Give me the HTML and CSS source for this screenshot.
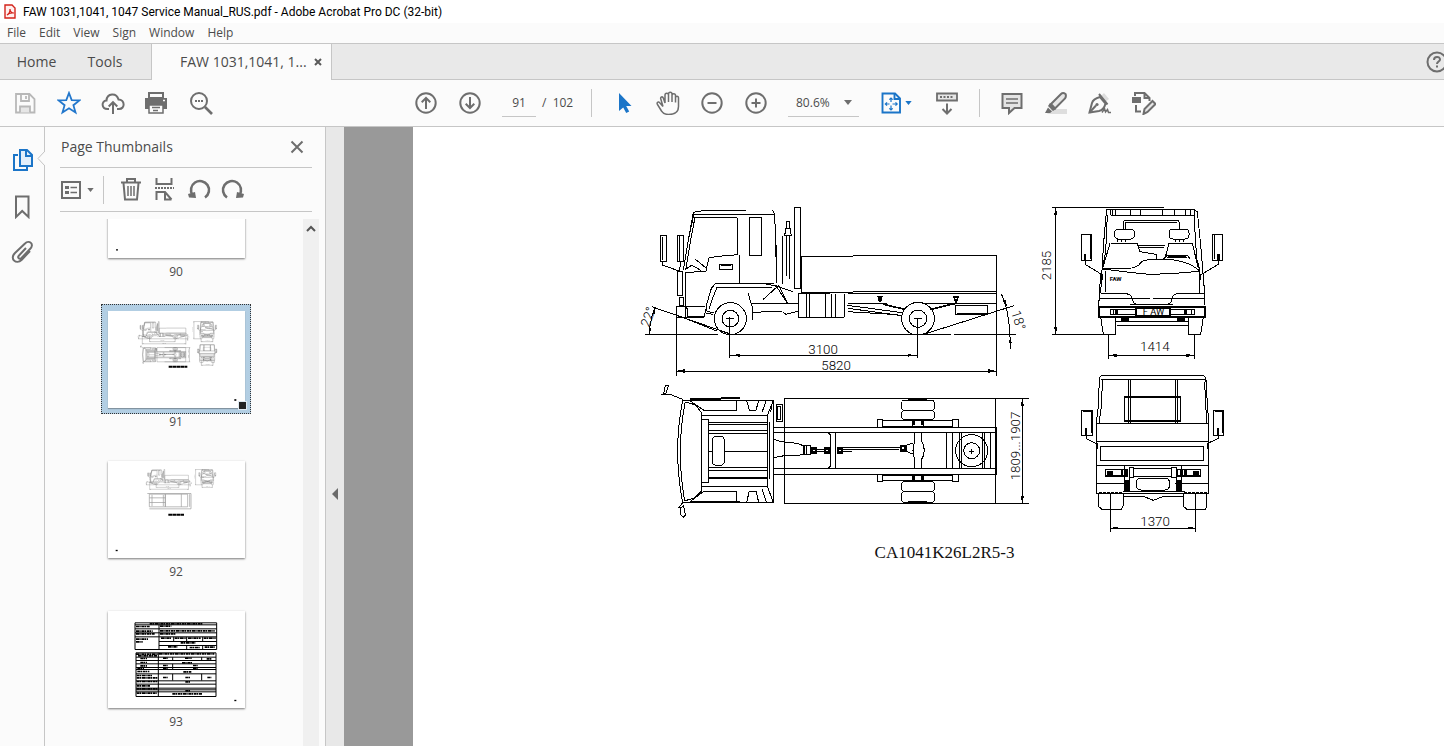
FILE: index.html
```html
<!DOCTYPE html>
<html lang="en">
<head>
<meta charset="utf-8">
<title>FAW 1031,1041, 1047 Service Manual_RUS.pdf - Adobe Acrobat Pro DC (32-bit)</title>
<link rel="stylesheet" href="styles.css">
</head>
<body>
<header class="titlebar">
  <svg class="app-icon" viewBox="0 0 12 15"><path d="M1 1h7l3 3v10H1z" fill="#fff0ef" stroke="#d3231b" stroke-width="1.4"/><path d="M3 11c2-1 3-4 3-6 0 3 1 4 4 4-3-.5-5 0-7 2z" fill="none" stroke="#d3231b" stroke-width="1.2"/></svg>
  <span>FAW 1031,1041, 1047 Service Manual_RUS.pdf - Adobe Acrobat Pro DC (32-bit)</span>
</header>
<nav class="menubar">
  <button>File</button><button>Edit</button><button>View</button><button>Sign</button><button>Window</button><button>Help</button>
</nav>
<div class="tabs">
  <button class="tab-home">Home</button><button class="tab-tools">Tools</button>
  <div class="tab-doc"><button class="doc-name">FAW 1031,1041, 1...</button><button class="doc-close" aria-label="Close tab"><svg viewBox="0 0 8 8"><path d="M1 1l6 6M7 1L1 7" stroke="#5a5a5a" stroke-width="2"/></svg></button></div>
  <button class="help" aria-label="Help"><svg viewBox="0 0 22 22"><g class="ln"><circle cx="11" cy="11" r="9.5"/><path d="M8 9c0-4 6-4 6-.5 0 2-3 2.200-3 4.500M11 14.500v2"/></g></svg></button>
</div>
<div class="toolbar">
  <button class="tool" aria-label="Save"><svg viewBox="0 0 24 24"><g fill="none" stroke="#b8b8b8" stroke-width="1.800"><path d="M3 3h13.500L21.500 8v13.500H3z"/><path d="M8 3v7h8V3"/><path d="M7 21.500V15.500h10v6" fill="#e6e6e6"/><path d="M13 5v3"/></g></svg></button>
  <button class="tool" aria-label="Star"><svg viewBox="0 0 24 24"><path d="M12 2l2.700 7.100 7.800.3-6.100 4.800 2.100 7.300L12 17.300l-6.500 4.200 2.100-7.300-6.100-4.800 7.800-.3z" fill="none" stroke="#2277cc" stroke-width="1.800"/></svg></button>
  <button class="tool" aria-label="Upload"><svg viewBox="0 0 24 24"><g class="ln"><path d="M8 18H6.500C.5 18-.200 10 5.500 9.500 6 2 15.500 1.500 17.500 8.500 24 8.500 24.500 18 18 18h-2"/><path d="M12 23V11.500M7.700 15.500l4.300-4.300 4.300 4.300"/></g></svg></button>
  <button class="tool" aria-label="Print"><svg viewBox="0 0 24 24"><path d="M4 2h14v5H4z" class="ln"/><path d="M0 7h22v11h-4v-4H4v4H0z" fill="#6e6e6e"/><path d="M4 14h14v8H4zM7 16.500h8M8 19.500h5" class="ln th"/><path d="M18 9.500h2" stroke="#fbfbfb" stroke-width="1.500"/></svg></button>
  <button class="tool" aria-label="Find"><svg viewBox="0 0 24 24"><circle cx="10" cy="10" r="8" class="ln"/><path d="M16 16l7 7" class="ln fat"/><path d="M6 9h2v2H6zm3 0h2v2H9zm3 0h2v2h-2z" fill="#6e6e6e"/></svg></button>
  <button class="tool page-tools" aria-label="Previous page"><svg viewBox="0 0 24 24"><g class="ln"><circle cx="12" cy="12" r="9.700"/><path d="M12 18V7M7.700 11.200L12 7l4.300 4.200"/></g></svg></button>
  <button class="tool" aria-label="Next page"><svg viewBox="0 0 24 24"><g class="ln"><circle cx="12" cy="12" r="9.700"/><path d="M12 6v11M7.700 12.800L12 17l4.300-4.200"/></g></svg></button>
  <input class="page-no" aria-label="Page number" value="91"><span class="page-total">/&nbsp; 102</span>
  <span class="sep"></span>
  <button class="tool" aria-label="Select"><svg viewBox="0 0 24 24"><path d="M7 2v18l4.200-3.500 3 5.500 3-1.500-3-5.500H19.500z" fill="#1b75c8"/></svg></button>
  <button class="tool" aria-label="Hand"><svg viewBox="0 0 24 24"><path class="ln th" d="M7 15.500L4 12C2 9.500.5 12 1.500 13.500l4 6.500c2 3 4 3.500 7 3.500 6 0 10-2.500 10-8V7c0-2.500-3-2.500-3 0v4.500M19.500 11V4.500c0-2.500-3.500-2.500-3.500 0V11M16 10V3c0-2.500-3.500-2.500-3.500 0v8M12.500 10V4C12.500 1.500 9 1.500 9 4v8L7.300 7C6.500 5 4 6 4.800 8L7 15.500"/></svg></button>
  <button class="tool" aria-label="Zoom out"><svg viewBox="0 0 24 24"><g class="ln"><circle cx="12" cy="12" r="9.700"/><path d="M7.500 12h9"/></g></svg></button>
  <button class="tool" aria-label="Zoom in"><svg viewBox="0 0 24 24"><g class="ln"><circle cx="12" cy="12" r="9.700"/><path d="M7.500 12h9M12 7.500v9"/></g></svg></button>
  <div class="zoom-box"><select aria-label="Zoom"><option>80.6%</option></select><svg class="caret" viewBox="0 0 8 5"><path d="M0 0h8L4 5z" fill="#6e6e6e"/></svg></div>
  <button class="fit" aria-label="Fit page"><svg class="fit-icon" viewBox="0 0 20 22"><g fill="none" stroke="#1b75c8" stroke-width="1.900"><path d="M1.500 1.500H14L19 6.500V20.500H1.500z"/><path d="M13.500 1.500V7H19"/><path stroke-width="1.200" d="M10 6v4M10 13.500V18M4.500 12h4M11.500 12h4.500M8.300 7.700L10 6l1.700 1.700M8.300 16.300L10 18l1.700-1.700M6 10.300L4.300 12 6 13.700M14.500 10.300l1.700 1.700-1.700 1.700"/></g></svg><svg class="caret small" viewBox="0 0 8 5"><path d="M0 0h8L4 5z" fill="#1b75c8"/></svg></button>
  <button class="tool" aria-label="Scrolling"><svg viewBox="0 0 24 24"><path d="M2 2.500h20v7H2z" fill="#e6e6e6" stroke="#6e6e6e" stroke-width="1.800"/><path d="M5 6h14" stroke="#6e6e6e" stroke-width="2" stroke-dasharray="2 1.500"/><path d="M12 12.500v10M7.500 18l4.500 4.500 4.500-4.500" class="ln"/></svg></button>
  <span class="sep"></span>
  <button class="tool" aria-label="Comment"><svg viewBox="0 0 24 24"><path d="M2.500 3h19v14h-7L9 22v-5H2.500z" fill="#e4e4e4" stroke="#6e6e6e" stroke-width="2"/><path d="M6 8h12M6 12h12" class="ln th"/></svg></button>
  <button class="tool" aria-label="Highlight"><svg viewBox="0 0 24 24"><path d="M7 18h16v5H3z" fill="#dedede"/><path d="M7 13L17 3q2-2 4.500 0 1 2-.5 4.500L11 17.500z" fill="#e6e6e6" stroke="#6e6e6e" stroke-width="2"/><path d="M6 12l6 6-3 2-5-5zM4 16.500l4 4L6 22H1z" fill="#6e6e6e"/></svg></button>
  <button class="tool" aria-label="Sign"><svg viewBox="0 0 24 24"><path d="M13 5l3-3 5 6-4 3z" fill="#dedede"/><g class="ln"><path d="M1.500 21.500L4 12q1-4 8-6l5.500 6.500Q16 19 11 20z"/><path d="M1.500 21.500l6.500-7M11 3l8.500 10.500"/></g><circle cx="9" cy="13.500" r="1.600" fill="#6e6e6e"/><path d="M14 21.500l2.500-4 1 3.500 2-2.500 1 3H23" class="ln th"/></svg></button>
  <button class="tool" aria-label="Edit"><svg viewBox="0 0 24 24"><path d="M0 6h9v6H0z" fill="#6e6e6e"/><g class="ln"><path d="M3 5V2h9.500l5 5v3M12.500 2v5h5M4 14v6.500h5"/><path d="M11.500 23l1-5 8-8 3 3-8 8z" fill="#e6e6e6"/></g></svg></button>
</div>
<main class="workspace">
  <nav class="rail">
    <button class="active" aria-label="Page Thumbnails"><svg viewBox="0 0 24 26"><g fill="none" stroke="#1b75c8" stroke-width="2"><path d="M9 3h7l5 5v11H9z" fill="#e2effb"/><path d="M15 3v6h6"/><path d="M7 8H3v15h13v-4"/></g></svg></button>
    <button aria-label="Bookmarks"><svg viewBox="0 0 24 26"><path d="M5 3.500h12.500V24l-6.300-6L5 24z" class="ln"/></svg></button>
    <button aria-label="Attachments"><svg viewBox="0 0 24 26"><path d="M15 9l-7 7.500c-2 2 .5 4.500 2.500 2.500l8.500-9c5-5-1-9.500-5-5.500L4 14c-6 6 1.500 12 6.500 7l8.500-9" class="ln"/></svg></button>
    <svg class="notch" viewBox="0 0 8 15"><path d="M8 0L1 7.500 8 15" fill="#fbfbfb" stroke="#c4c4c4"/></svg>
  </nav>
  <aside class="panel">
    <div class="panel-head"><h2>Page Thumbnails</h2><button aria-label="Close panel"><svg viewBox="0 0 14 14"><path d="M1.500 1.500l11 11M12.500 1.500l-11 11" class="ln"/></svg></button></div>
    <div class="panel-tools">
      <button class="options" aria-label="Options"><svg class="opt-icon" viewBox="0 0 20 18"><path d="M1 1h18v16H1z" class="ln"/><path d="M4 5h4v3H4zM4 10h4v3H4z" fill="#6e6e6e"/><path d="M9.500 6.500H16M9.500 11.500H16" class="ln th"/></svg><svg class="caret small" viewBox="0 0 8 5"><path d="M0 0h8L4 5z" fill="#6e6e6e"/></svg></button>
      <span class="sep"></span>
      <button class="ptool" aria-label="Delete"><svg viewBox="0 0 24 24"><g class="ln"><path d="M2 4.500h20M8 4V1h8v3M4.500 5l1.500 16.500h12L19.500 5"/><path class="th" d="M9 8v10M12 8v10M15 8v10"/></g></svg></button>
      <button class="ptool" aria-label="Split"><svg viewBox="0 0 24 24"><g class="ln"><path d="M3.500 0v6h15V0M3.500 22V14H12l6.500 7.500M12 14v7.500h6.500"/><path d="M2 10h19" stroke-dasharray="2 1"/></g></svg></button>
      <button class="ptool" aria-label="Rotate left"><svg viewBox="0 0 24 24"><path d="M5.500 17A9 9 0 1 1 18 19.500" class="ln fat"/><path d="M1 16l7-2 1 6-7-.5z" fill="#6e6e6e"/></svg></button>
      <button class="ptool" aria-label="Rotate right"><svg viewBox="0 0 24 24"><path d="M18.500 17A9 9 0 1 0 6 19.500" class="ln fat"/><path d="M23 16l-7-2-1 6 7-.5z" fill="#6e6e6e"/></svg></button>
    </div>
    <div class="list">
      <div class="thumbs">
        <figure><div class="frame"><svg class="thumb" viewBox="0 0 411 290"><path d="M24 264h6v4h-6z"/></svg></div><figcaption>90</figcaption></figure>
        <figure class="selected"><div class="frame"><svg class="thumb" viewBox="0 0 411 290"><svg class="mini" x="86" y="26" width="245" height="141" viewBox="0 0 1800 1035"><use href="#truck"/></svg><path d="M182 167h56" stroke="#000" stroke-width="6" stroke-dasharray="11 1"/><path d="M379 264h6v5h-6z"/></svg><span class="handle"></span></div><figcaption>91</figcaption></figure>
        <figure><div class="frame"><svg class="thumb" viewBox="0 0 411 290"><svg class="mini" x="110" y="20" width="218" height="126" viewBox="0 0 1800 1035"><use href="#side"/><use href="#front"/></svg><g fill="none" stroke="#999" stroke-width="2"><path d="M124 99h48v38h-48zM172 99h67v38h-67zM124 110h48M124 124h48M220 99v38M118 97h131v46H124M245 99v38M132 101v34M166 101v34"/></g><path d="M181 161h47" stroke="#000" stroke-width="6" stroke-dasharray="11 1"/><path d="M23 266h6v4h-6z"/></svg></div><figcaption>92</figcaption></figure>
        <figure><div class="frame"><svg class="thumb" viewBox="0 0 411 290"><g fill="none" stroke="#000" stroke-width="3"><path d="M81 35h245v80H81zM81 41h245M81 53h245M81 65h245M81 77h245M153 41v74M153 91h173M153 103h173M197 77v14M236 77v14M284 77v14M236 103v12M284 103v12M84 125h240v131H84zM84 138h240M84 148h240M84 158h240M84 169h240M84 175h240M84 188h240M84 209h240M84 219h240M84 231h240M84 236h240M84 242h240M151 125v131M194 138v10M194 158v17M194 188v20M281 138v10M281 188v20"/></g><g fill="none" stroke="#000" stroke-width="5" stroke-dasharray="9 1 4 2"><path d="M125 38h158M84 46h42M84 60h50M84 68h56M84 84h36M84 92h20M156 45h34M156 59h164M156 68h48M159 81h30M200 81h35M240 81h38M287 81h36M218 95h44M180 107h28M245 109h30M290 108h30M84 129h66M153 128h166M90 134h58M97 142h20M165 141h16M231 141h20M296 143h14M97 154h20M222 155h30M97 164h20M165 163h14M255 163h16M88 172h20M165 172h14M255 172h16M88 181h36M226 182h24M86 193h46M86 200h64M165 199h14M232 199h14M298 199h12M86 211h62M232 212h14M86 224h40M86 233h62M232 239h14M86 246h60M193 248h90"/></g><path d="M379 266h6v4h-6z"/></svg></div><figcaption>93</figcaption></figure>
      </div>
      <div class="scroll"><svg viewBox="0 0 10 7"><path d="M1 6l4-4 4 4" fill="none" stroke="#555" stroke-width="2"/></svg></div>
    </div>
  </aside>
  <button class="grip" aria-label="Collapse panel"><svg viewBox="0 0 6 12"><path d="M6 0v12L0 6z" fill="#6a6a6a"/></svg></button>
  <section class="document">
    <article class="page">
      <svg class="drawing" viewBox="0 0 1800 1035">
        <g id="truck">
          <!-- Side elevation -->
          <g id="side">
            <path d="M145 225l15-90 15-83 30-5 130-2 78 0 6 13 3 82 2 90M152 225l14-84 14-74h126l2 112-46 4-40 5-5 22-4 18-61 5M160 135l16-76h240M343 66h36v114h-36zM253 208h40v14h-40zM257 211h32M312 180v84M152 223l18-12 28 15M180 192l32 26M77 121h18v78H77zM83 126v70M127 121h17v78h-17zM134 124v75M82 199v11l50 18M136 199l-2 33M128 230h13v70h-13zM133 307h12v25h-12zM124 333h26v33h-26zM150 230v103h60M155 332l4 33h48l8-30M124 366h82M242 265h176M242 277h170M242 265l-13 15-16 55 2 14M246 277l-16 40-8 24"/>
            <path d="M478 38h18v242h-18zM455 80h8v20h-8zM453 100h12l4 21h-20zM455 122v120M462 122v130M443 124v143M424 150v114M380 264l45 10 50 16M385 313l46-42 27 54M422 270l35 55M339 294l13 43v38M350 325h140M350 354l45-5 46 1M443 350l10 8 37-10M215 349l22 5M214 354l20 4M498 184h156M498 184v109M498 293h156M490 296v71h34v-71M514 296v71M570 296v71M588 296v71M490 296h95M490 367h138"/>
            <path d="M654 181h430v142M654 290h430M640 296h444M640 325h115M865 325h220M628 296v71M601 296v71M635 331l33 4 133 18M640 340l160 22M638 350l150 9M965 323l-75 20M960 325l-4 5M961 331v27h97v-28h-94zM970 354h86"/>
            <path stroke-width="5" d="M730 306h10l-3 11h-4zM957 306h12l-4 12h-4zM745 328l65 15M885 344l68-17M965 357h88"/>
            <circle cx="286" cy="371" r="48"/><circle cx="286" cy="371" r="25"/><circle cx="849" cy="371" r="49"/><circle cx="849" cy="371" r="26"/><path d="M274 371h24M284 365v123M836 371h24M848 368v120"/>
            <path d="M30 418h219M275 418h673M956 418h187M50 335l236 82M150 370l95 38M869 417l268-85M60 336q-14 35-18 83M1099 297q27 55 27 166M124 366v177M1084 323v220M284 481h564M124 528h960"/>
            <path class="fill" d="M284 481l30-4v8zM848 481l-30-4v8zM124 528l26-6v12zM1084 528l-26-6v12zM60 336l-8 22 9-1zM42 419l0-20 8 2zM1116 335l-12-17 9-2zM1126 424l-4 20h8z"/>
            <g class="dim"><text x="520" y="477">3100</text><text x="559" y="525">5820</text><text transform="translate(42 398) rotate(-70)">22°</text><text transform="translate(1128 352) rotate(72)">18°</text></g>
          </g>
          <!-- Plan view -->
          <g transform="translate(45 540)">
            <path d="M98 76q-30 150 0 307M106 80q-29 145-2 298M98 75h272v308H98M105 81l30 8 20 24v235l-20 20-32 10M155 121h197v213H155M120 77l43 30h97V75M120 380l40-30h100v33M155 133h21v188h-21M176 142h176M176 148h176M176 165h176M176 175h176M176 230h11M223 230h129M176 278h176M176 285h176M176 307h176M176 311h176M358 140v172M352 121l18-45M352 334l18 48M336 112l13-36M361 112l5-20M336 343l13 39M290 76l8 30h20l8-30M290 382l8-34h20l8 34M98 73l-40-16M41 57l5-27h10l-8 25zM33 57h25M98 383l-12 16M92 399v20l8 8 6-7-5-27z"/>
            <rect x="187" y="184" width="36" height="87" rx="12"/><path d="M378 88h18v51h-18zM382 93h10v40h-10zM403 71h633M403 385h633M403 71v315M370 157h666M370 172h666M370 280h666M370 297h666M370 192l22 8 50 5 20 8v26l-25 2-34 1-33 6M460 212h20v26h-20zM470 212v26M480 223h55M480 230h55M535 173l5 5v96l-5 6M556 173v107M560 223h45M560 230h45"/>
            <path stroke-width="6" d="M120 73l150-4M120 382h150M485 218h12v15h-12zM525 218h12v15h-12zM565 218h12v15h-12z"/>
          </g>
          <g transform="translate(615 570)">
            <path d="M0 41h566M0 355h566M466 41v314M0 188h180M0 194h90l90-2M180 182h20v18h-20zM200 180l18-5M200 200l22 8M223 142v32q-8 24 0 44v33M244 142v25q18 30 0 58v26M320 142v108M337 142v108M359 142v108M363 142v108M428 142v108M432 142v108M451 142v108M112 103h14v23h-14zM338 103h17v23h-17zM126 107h212M126 124h212M112 269h14v21h-14zM338 269h17v21h-17zM126 271h212M126 287h212M218 107h32v16h-32zM218 271h32v16h-32zM547 41v314"/>
            <path stroke-width="5" d="M468 126v143"/><rect x="184" y="45" width="100" height="31" rx="11"/><rect x="184" y="76" width="100" height="28" rx="11"/><rect x="184" y="289" width="100" height="30" rx="11"/><rect x="184" y="319" width="100" height="34" rx="11"/><path stroke-width="6" d="M205 43h55M205 351h55M184 184h10v12h-10zM222 108v12M246 108v12M222 273v12M246 273v12"/>
            <circle cx="395" cy="197" r="48"/><circle cx="395" cy="197" r="24"/><path d="M388 199h14M395 192v14"/><path class="fill" d="M547 41l-5 22h10zM547 355l-5-22h10z"/>
            <g class="dim"><text transform="translate(539 286) rotate(-90)">1809...1907</text></g>
          </g>
          <!-- Front elevation -->
          <g id="front" transform="translate(1185 0)">
            <path d="M65 38h338M77 38v380M65 418h165M230 42h260l12 8 10 100 12 145M230 42l-9 100-9 152M242 60h250l8 130 10 36M232 60l-5 110-10 52M240 42v18M246 42v18M257 42v18M300 42v18M332 42v18M398 42v18M434 42v18M467 42v18M480 42v18M492 42v18M281 102V80q0-5 8-5h150q8 0 8 5v22M287 102V81h155M263 132v10M275 132v10M287 132v10M435 132v10M447 132v10M459 132v10M242 145h80l8 25 48 8v17M405 190l12-45h70l18 75M240 145l-22 75h75q30 0 40-18 10-9 45-9 90-4 132 36M325 152h80M325 158h76M400 193l12-12h60l8 10M220 222q90 12 140 16 90-2 148-10M227 228v64M508 228v66M212 294h65q25 2 29 14 2 20 18 20h85q16 0 18-20 2-14 29-14h66M212 234l-6 100M522 294v36M206 310h155M370 310h154M300 329h130"/>
            <rect x="253" y="102" width="61" height="30" rx="12"/><rect x="417" y="102" width="60" height="30" rx="12"/>
            <path stroke-width="5" d="M206 336h319v29H206zM318 338h101v25H318z"/><path d="M240 344h77v14h-77zM420 344h74v14h-74zM250 344v14M484 344v14M155 118h29v77h-29zM180 121v70M165 178v30l53 32M548 118h29v77h-29zM552 121v70M565 178v30l-53 32M216 236v18M512 236v18M212 366l8 52h35v-52M476 366v52h36l8-52M255 378h220M262 392h215M255 378v12"/><path class="fill" d="M272 365h24v13h-24zM440 365h24v13h-24zM255 344h8v14h-8zM463 344h8v14h-8zM162 178h7v20h-7zM562 178h7v20h-7zM412 185q30-6 60 0v5q-30-5-60 0z"/>
            <path d="M236 418v73M493 418v73M236 481h257"/><path class="fill" d="M77 38l-5 22h10zM77 418l-5-22h10zM236 481l24-5v10zM493 481l-24-5v10z"/>
            <g class="dim"><text transform="translate(62 256) rotate(-90)">2185</text><text x="330" y="469">1414</text><text class="badge" x="338" y="359">F AW</text><text class="logo" x="239" y="257">FAW</text></g>
          </g>
          <!-- Rear elevation -->
          <g transform="translate(1275 510)">
            <path d="M118 44q0-13 13-13h293q13 0 14 13l3 55 5 76M123 44h312M118 44l-3 80-6 50M128 44l-5 90-6 40M438 44l-4 10 6 120M110 175h335v209H110zM110 230h335M121 245h310v41H121zM110 300h335M110 355h85M345 355h100M205 43v132M211 43v132M346 43v132M352 43v132M65 136h33v75H65zM70 140h23v65M460 136h30v75h-30zM464 140h22v65M78 190v30l33 17M475 190v30l-32 15M112 234v18M443 234v18M207 308h14v28h-14zM335 308h14v28h-14zM221 310h114M221 335h114M207 340v38M350 340v38M190 378h185M190 394h60l30 12 30-12h60M115 384v40l10 8h60l4-8v-40M370 384v40l10 8h56l4-8v-40M192 300v46M364 300v46"/>
            <path stroke-width="5" d="M193 96h168v72H193z"/><path stroke-width="4" d="M136 314h67v19h-67zM352 314h70v19h-70z"/><rect x="228" y="339" width="101" height="36" rx="14"/>
            <path class="fill" d="M142 318h18v12h-18zM183 314h7v19h-7zM196 314h7v19h-7zM360 316h8v15h-8zM372 316h8v15h-8zM400 318h18v12h-18zM192 345h19v34h-19zM347 345h20v34h-20zM75 190h7v20h-7zM472 190h6v20h-6z"/><path stroke-width="5" stroke-dasharray="8 4" d="M118 383h70M372 383h68"/>
            <path d="M151 383v117M407 383v117M151 489h256"/><path class="fill" d="M151 489l24-5v10zM407 489l-24-5v10z"/><g class="dim"><text x="241" y="482">1370</text></g>
          </g>
        </g>
      </svg>
      <p class="caption">CA1041K26L2R5-3</p>
    </article>
  </section>
</main>
</body>
</html>
```
FILE: styles.css
```css
* { box-sizing: border-box; }
body { margin: 0; height: 100vh; display: flex; flex-direction: column; overflow: hidden; background: #fbfbfb; color: #4b4b4b; font: 12px/16px "Open Sans", "Noto Sans", sans-serif; }
button, input, select { font: inherit; color: inherit; background: none; border: 0; padding: 0; margin: 0; }
button { display: flex; align-items: center; justify-content: center; flex: none; }
svg { display: block; flex: none; }
.ln { fill: none; stroke: #6e6e6e; stroke-width: 2; }
.th { stroke-width: 1.5; }
.fat { stroke-width: 2.6; }

.titlebar { flex: none; height: 23px; padding-left: 4px; display: flex; align-items: center; gap: 7px; background: #fff; color: #000; white-space: nowrap; font-family: Roboto, sans-serif; font-size: 12px; }
.app-icon { width: 12px; height: 15px; }
.menubar { flex: none; height: 20px; display: flex; align-items: center; gap: 13px; padding-left: 7px; }

.tabs { flex: none; height: 37px; display: flex; background: #e9e9e9; border-top: 1px solid #c6c6c6; font-size: 14px; overflow: hidden; }
.tab-home, .tab-tools { border-bottom: 1px solid #c6c6c6; }
.tab-home { width: 73px; }
.tab-tools { width: 78px; padding-right: 14px; }
.tab-doc { flex: none; width: 181px; display: flex; align-items: center; gap: 12px; padding-left: 28px; background: #fbfbfb; border: solid #c6c6c6; border-width: 0 1px; }
.doc-name { width: 122px; justify-content: flex-start; white-space: nowrap; }
.doc-close svg { width: 8px; height: 8px; }
.help { flex: 1; justify-content: flex-end; border-bottom: 1px solid #c6c6c6; }
.help svg { width: 22px; height: 22px; margin-right: -4px; }

.toolbar { flex: none; height: 47px; display: flex; align-items: center; padding-left: 3px; border-bottom: 1px solid #c6c6c6; }
.tool { width: 44px; height: 46px; }
.tool svg { width: 24px; height: 24px; }
.page-tools { margin-left: 181px; }
.page-no { width: 34px; height: 28px; margin-left: 10px; text-align: center; border-bottom: 1px solid #c6c6c6; }
.page-total { flex: none; width: 48px; padding-left: 6px; white-space: nowrap; }
.sep { flex: none; width: 1px; height: 28px; background: #c6c6c6; }
.toolbar .sep { margin: 0 10px; }
.page-total + .sep { margin-left: 7px; }
.zoom-box { flex: none; width: 71px; height: 28px; margin-left: 10px; padding: 0 7px 0 8px; display: flex; align-items: center; justify-content: space-between; border-bottom: 1px solid #c6c6c6; }
.zoom-box select { appearance: none; width: 40px; }
.caret { width: 8px; height: 5px; }
.caret.small { width: 7px; height: 4px; }
.fit { width: 36px; margin: 0 11px 0 19px; gap: 4px; height: 46px; }
.fit-icon { width: 20px; height: 22px; }

.workspace { flex: 1; min-height: 0; display: flex; }
.rail { position: relative; flex: none; width: 45px; border-right: 1px solid #c6c6c6; padding-top: 10px; display: flex; flex-direction: column; }
.rail button { width: 46px; height: 46px; }
.rail button svg { width: 24px; height: 26px; }
.rail .notch { position: absolute; right: -1px; top: 24px; width: 8px; height: 15px; }
.panel { flex: none; width: 281px; display: flex; flex-direction: column; border-right: 1px solid #c6c6c6; }
.panel-head { flex: none; height: 41px; margin: 0 13px 0 15px; padding: 0 8px 0 1px; display: flex; align-items: center; justify-content: space-between; border-bottom: 1px solid #c6c6c6; }
.panel-head h2 { margin: 0; font-size: 14px; font-weight: 400; }
.panel-head svg { width: 14px; height: 14px; }
.panel-tools { flex: none; height: 44px; margin: 0 13px 0 15px; display: flex; align-items: center; border-bottom: 1px solid #c6c6c6; }
.options { gap: 6px; margin: 0 9px 0 1px; }
.opt-icon { width: 20px; height: 18px; }
.ptool { width: 34px; height: 40px; }
.ptool svg { width: 24px; height: 24px; }
.panel-tools .sep { margin-right: 10px; }
.list { flex: 1; min-height: 0; margin-top: 7px; overflow: hidden; display: flex; justify-content: space-between; padding: 0 6px 0 56px; }
.thumbs { margin-top: -65px; }
figure { margin: 0; height: 150px; width: 150px; }
.frame { position: relative; height: 110px; padding: 7px; border: 0 dotted #333; }
.thumb { width: 137px; height: 97px; background: #fff; box-shadow: 0 1px 2px #777; }
.selected .frame { background: #b2cee3; padding: 6px; border-width: 1px; }
.selected .thumb { box-shadow: 0 1px 1px #8293a0; }
.handle { position: absolute; right: 4px; bottom: 4px; width: 7px; height: 7px; background: #222; outline: 1px solid #dfeaf2; }
figcaption { text-align: center; }
.scroll { width: 16px; background: #f0f0f0; padding: 6px 3px; }
.scroll svg { width: 10px; height: 7px; }
.grip { width: 18px; background: #e8e8e8; }
.grip svg { width: 6px; height: 12px; margin-top: 114px; }
.document { flex: 1; min-width: 0; padding-left: 69px; background: #999; overflow: hidden; display: flex; }
.page { flex: 1; background: #fff; overflow: hidden; padding: 68px 0 0 222px; }
.drawing { width: 600px; height: 345px; stroke-width: 3; shape-rendering: crispEdges; }
#truck, #side, #front { fill: none; stroke: #000; }
#truck .fill, #side .fill, #front .fill { fill: #000; stroke: none; }
.dim { fill: #000; stroke: none; font: 300 40px Roboto, "Liberation Sans", sans-serif; }
.badge { font-size: 28px; font-weight: 400; }
.logo { font-size: 18px; font-weight: 700; }
.mini { stroke-width: 8; opacity: .55; }
.caption { margin: 3px 0 0; width: 619px; text-align: center; color: #111; font: 17px/20px "Liberation Serif", serif; }
```
